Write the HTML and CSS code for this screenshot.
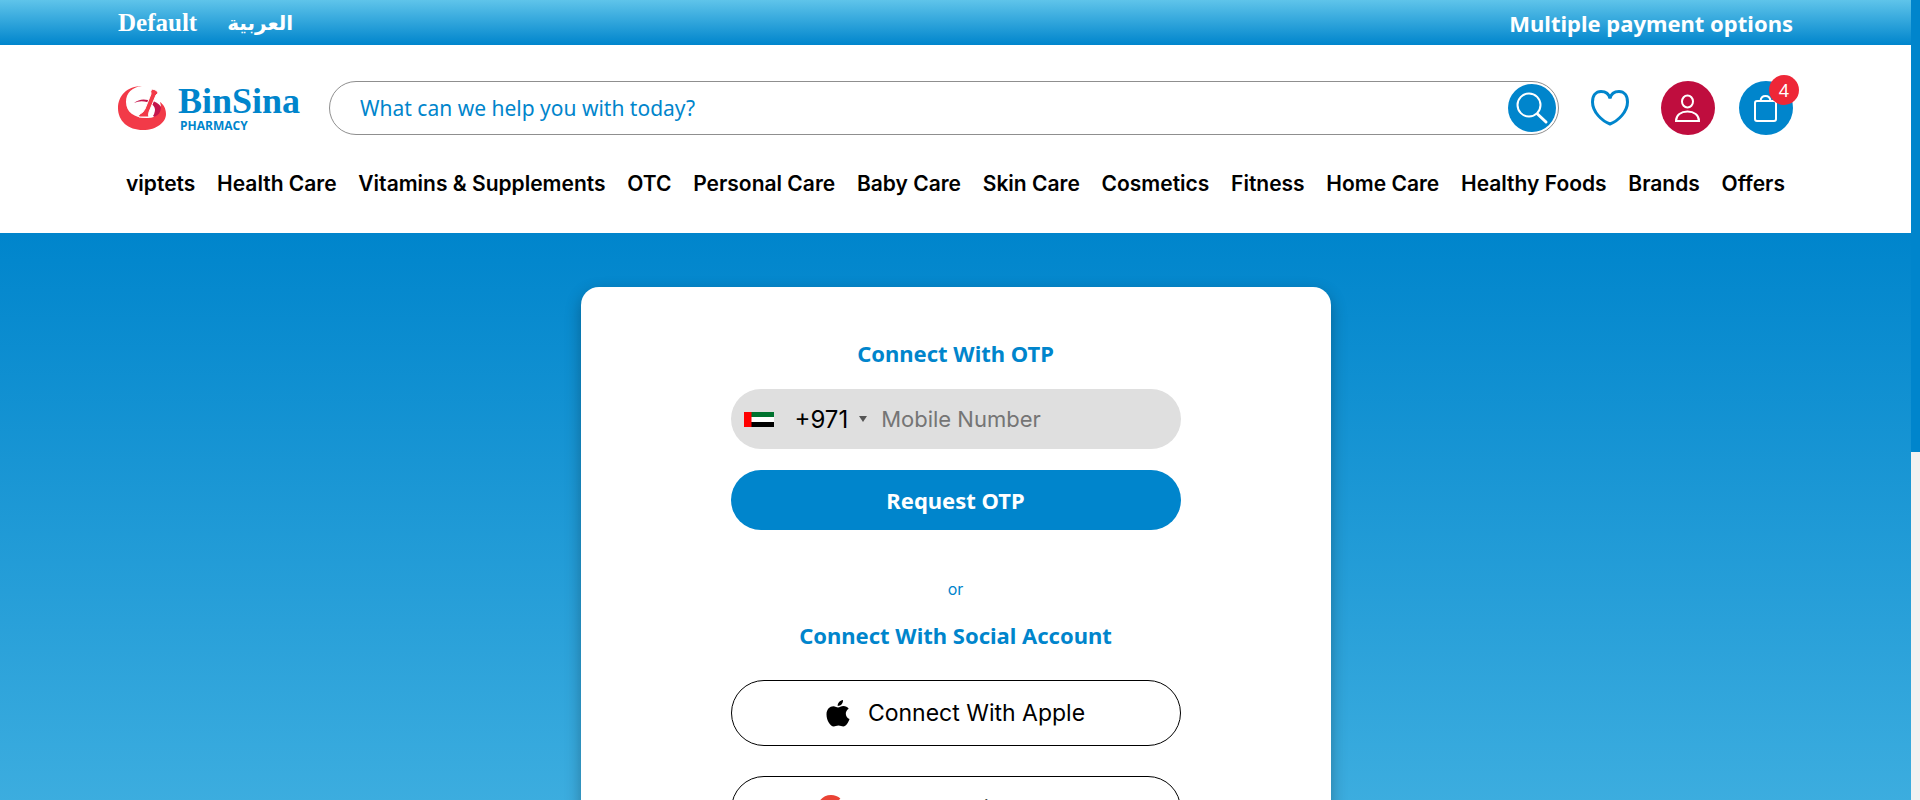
FILE: index.html
```html
<!DOCTYPE html>
<html lang="en">
<head>
<meta charset="utf-8">
<title>BinSina Pharmacy</title>
<link rel="stylesheet" href="styles.css">
</head>
<body>
<div class="shell">
  <div class="page">
    <div class="topbar">
      <nav class="languages" aria-label="Language">
        <a class="lang-default" href="#">Default</a>
        <a class="lang-arabic" href="#" lang="ar">العربية</a>
      </nav>
      <span class="notice">Multiple payment options</span>
    </div>
    <header class="header">
      <div class="tools">
        <a class="logo" href="#" aria-label="BinSina Pharmacy">
          <svg class="logo-mark" viewBox="0 0 48 46" aria-hidden="true">
            <path d="M16 18Q22 13 30 15Q44 17 45 28Q45 32 41 35L35 31Q41 21 29 17Q22 15 16 18Z" fill="#c4154c"/>
            <path d="M24 1C9 1 0 11 0 23C0 36 10 45 25 45C39 45 48 37 48 29C48 23 45 19 42 17C45 26 41 33 29 33C16 33 8 27 8 17C8 8 14 2 24 1Z" fill="#f23a48"/>
            <path d="M34 4Q37 4 40 7Q40 9 38 10L31 27Q30 31 31 32L21 32Q20 30 22 29Q25 28 27 24L33 9Q32 6 34 4Z" fill="#f23a48" stroke="#fff"/>
          </svg>
          <span class="wordmark"><span class="brand">BinSina</span><span class="brand-sub">PHARMACY</span></span>
        </a>
        <form class="search">
          <input class="search-input" type="search" aria-label="Search" placeholder="What can we help you with today?">
          <button class="search-button" type="button" aria-label="Search">
            <svg viewBox="0 0 48 48"><circle cx="21" cy="21" r="11.5"/><path d="M29.500 30L38 38" stroke-width="3"/></svg>
          </button>
        </form>
        <a class="wish" href="#" aria-label="Wishlist">
          <svg viewBox="0 0 38 36"><path d="M19 34C11 31 1.500 22 1.500 12C1.500 5.500 5 1.500 10 1.500C14.500 1.500 18 4 19 8.500C20 4 23.500 1.500 28 1.500C33 1.500 36.500 5.500 36.500 12C36.500 22 27 31 19 34Z"/></svg>
        </a>
        <a class="round account" href="#" aria-label="Account">
          <svg viewBox="0 0 54 54"><ellipse cx="26.500" cy="20.500" rx="5.500" ry="6"/><path d="M15 40C15 34 20 30.500 26.500 30.500C33 30.500 38 34 38 40Z"/></svg>
        </a>
        <a class="round cart" href="#" aria-label="Cart">
          <svg viewBox="0 0 54 54"><rect x="16" y="20" width="21" height="20" rx="2"/><path d="M21.500 20Q22 15 26.500 15Q31 15 31.500 20"/></svg>
          <span class="badge">4</span>
        </a>
      </div>
      <nav class="menu" aria-label="Categories">
        <a href="#">viptets</a><a href="#">Health Care</a><a href="#">Vitamins &amp; Supplements</a><a href="#">OTC</a><a href="#">Personal Care</a><a href="#">Baby Care</a><a href="#">Skin Care</a><a href="#">Cosmetics</a><a href="#">Fitness</a><a href="#">Home Care</a><a href="#">Healthy Foods</a><a href="#">Brands</a><a href="#">Offers</a>
      </nav>
    </header>
    <main class="main">
      <section class="card">
        <form class="otp">
          <h2 class="title">Connect With OTP</h2>
          <div class="phone">
            <button class="dial" type="button" aria-label="Country code +971">
              <svg class="flag" viewBox="0 0 30 15" aria-hidden="true"><path fill="#00732f" d="M0 0h30v5H0z"/><path fill="#fff" d="M0 5h30v5H0z"/><path d="M0 10h30v5H0z"/><path fill="#f00" d="M0 0h7.500v15H0z"/></svg>
              <span class="code">+971</span>
              <span class="caret"></span>
            </button>
            <input class="number" type="tel" aria-label="Mobile Number" placeholder="Mobile Number">
          </div>
          <button class="request" type="button">Request OTP</button>
        </form>
        <p class="or">or</p>
        <h2 class="title">Connect With Social Account</h2>
        <div class="socials">
          <button class="social" type="button">
            <svg class="apple" viewBox="0 0 24 28" aria-hidden="true"><path d="M17 1C17.300 4 15 7 11.700 7C11.500 4 14 1.500 17 1ZM12 8.500C13.500 8.500 15 7 17.500 7C19.500 7 21.500 8 22.700 9.700C18.500 12.200 19 18 23.500 20C22.500 23 20 27.500 17.300 27.500C15.500 27.500 14.700 26.500 12.500 26.500C10.200 26.500 9.400 27.500 7.700 27.500C4.500 27.500 .5 21.500 .5 15.500C.5 10 4 7.200 7.300 7.200C9.400 7.200 10.900 8.500 12 8.500Z"/></svg>
            Connect With Apple
          </button>
          <button class="social" type="button">
            <svg class="google" viewBox="0 0 48 48" aria-hidden="true"><path fill="#ea4335" d="M24 9.500c3.500 0 6.700 1.200 9.200 3.600l6.900-6.900C35.900 2.400 30.500 0 24 0 14.600 0 6.500 5.400 2.600 13.200l8 6.200C12.400 13.700 17.700 9.500 24 9.500z"/><path fill="#4285f4" d="M47 24.600c0-1.600-.2-3.100-.4-4.600H24v9h12.900c-.6 3-2.300 5.500-4.800 7.200l7.700 6C44.400 38 47 31.800 47 24.600z"/><path fill="#fbbc05" d="M10.500 28.600a14.500 14.500 0 010-9.200l-8-6.200a24 24 0 000 21.600l8-6.200z"/><path fill="#34a853" d="M24 48c6.500 0 11.900-2.100 15.900-5.800l-7.700-6c-2.200 1.500-4.900 2.300-8.200 2.300-6.300 0-11.600-4.200-13.500-9.900l-8 6.200C6.500 42.600 14.600 48 24 48z"/></svg>
            Connect With Google
          </button>
        </div>
      </section>
    </main>
  </div>
  <div class="scroll-track" aria-hidden="true"><div class="scroll-thumb"></div></div>
</div>
</body>
</html>
```
FILE: styles.css
```css
:root {
  --blue: #0085cc;
  --edge: 118px;
  --display: "Noto Sans", "Open Sans", sans-serif;
}

* { box-sizing: border-box; }

body {
  margin: 0;
  font-family: Inter, "Liberation Sans", sans-serif;
  color: #000;
}

a { color: inherit; text-decoration: none; }
button, input { font: inherit; }

.shell {
  display: grid;
  grid-template-columns: minmax(0, 1fr) 9px;
  height: 100vh;
  overflow: hidden;
}

.page { overflow: hidden; }

.topbar {
  display: flex;
  align-items: center;
  justify-content: space-between;
  height: 45px;
  padding: 0 var(--edge);
  background: linear-gradient(#5fc4ea, var(--blue));
  color: #fff;
  font: bold 22px/32px var(--display);
}

.languages { display: flex; align-items: center; gap: 30px; }
.lang-default { font: bold 25px/32px "Liberation Serif", serif; }
.lang-arabic { font: bold 20px/32px "DejaVu Sans", sans-serif; }

.header {
  padding: 36px var(--edge) 36px;
  background: #fff;
}

.tools { display: flex; align-items: center; }

.logo { display: flex; align-items: center; gap: 12px; width: 211px; }
.logo-mark { width: 48px; height: 46px; flex: none; }
.wordmark { display: flex; flex-direction: column; color: var(--blue); }
.brand { font: bold 36px/36px "Liberation Serif", serif; }
.brand-sub { padding-left: 2px; font: bold 12px/14px "Open Sans", sans-serif; }

.search {
  display: flex;
  flex: 1;
  align-items: center;
  height: 54px;
  padding: 0 2px 0 30px;
  border: 1px solid #8f8f8f;
  border-radius: 27px;
}
.search-input {
  flex: 1;
  min-width: 0;
  padding: 0;
  border: 0;
  outline: 0;
  background: none;
  font: 21px/32px var(--display);
}
.search-input::placeholder { color: var(--blue); opacity: 1; }
.search-button {
  width: 48px;
  height: 48px;
  padding: 0;
  border: 0;
  border-radius: 50%;
  background: var(--blue);
}
.search-button svg, .round svg {
  display: block;
  fill: none;
  stroke: #fff;
  stroke-width: 2;
  stroke-linecap: round;
}

.wish { margin: 0 32px; }
.wish svg { display: block; width: 38px; height: 36px; fill: none; stroke: var(--blue); stroke-width: 3; }

.round { position: relative; width: 54px; height: 54px; border-radius: 50%; }
.account { background: #bf0d3e; }
.cart { margin-left: 24px; background: var(--blue); }
.badge {
  position: absolute;
  top: -6px;
  right: -6px;
  width: 30px;
  height: 30px;
  border-radius: 50%;
  background: #ee2737;
  color: #fff;
  font: 18px/30px var(--display);
  text-align: center;
}

.menu {
  display: flex;
  justify-content: space-between;
  margin-top: 35px;
  padding: 0 8px;
  font-size: 21px;
  font-weight: 600;
  line-height: 27px;
  white-space: nowrap;
}

.main {
  display: flex;
  justify-content: center;
  height: 900px;
  padding-top: 54px;
  background: linear-gradient(var(--blue), #5fc4ea);
}

.card {
  display: flex;
  flex-direction: column;
  align-items: stretch;
  width: 750px;
  padding: 49px 150px;
  border-radius: 18px;
  background: #fff;
  box-shadow: 0 6px 16px rgba(0, 0, 0, .3);
}

.title {
  margin: 0;
  color: var(--blue);
  font: bold 22px/34px var(--display);
  text-align: center;
}

.phone {
  display: flex;
  align-items: center;
  height: 60px;
  margin-top: 19px;
  padding: 0 13px;
  border-radius: 30px;
  background: #dfdfdf;
  font-size: 24px;
}
.dial {
  display: flex;
  align-items: center;
  padding: 0;
  border: 0;
  background: none;
  color: #000;
}
.flag { width: 30px; height: 15px; }
.code { margin-left: 21px; }
.caret {
  margin: 0 14px 0 11px;
  border: 4px solid transparent;
  border-top: 6px solid #555;
  border-bottom: 0;
}
.number {
  flex: 1;
  min-width: 0;
  padding: 0;
  border: 0;
  outline: 0;
  background: none;
  font-size: 22px;
}
.number::placeholder { color: #757575; opacity: 1; }

.request {
  display: block;
  width: 100%;
  height: 60px;
  margin-top: 21px;
  border: 0;
  border-radius: 30px;
  background: var(--blue);
  color: #fff;
  font: bold 22px/32px var(--display);
}

.or {
  margin: 47px 0 17px;
  color: var(--blue);
  font-size: 16px;
  line-height: 24px;
  text-align: center;
}

.socials { display: flex; flex-direction: column; gap: 30px; margin-top: 28px; }
.social {
  display: flex;
  align-items: center;
  justify-content: center;
  gap: 18px;
  height: 66px;
  border: 1px solid #000;
  border-radius: 33px;
  background: #fff;
  color: #000;
  font-size: 23px;
}
.apple { width: 24px; height: 28px; }
.google { width: 28px; height: 28px; }

.scroll-track { background: #f1f1f1; }
.scroll-thumb { height: 56.5%; background: var(--blue); }
```
